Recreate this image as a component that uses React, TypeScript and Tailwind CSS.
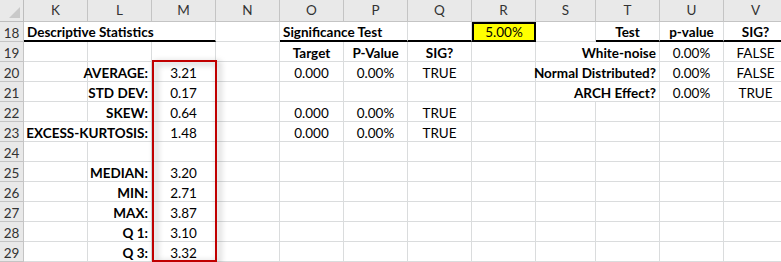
type Align = 'left' | 'center' | 'right';

interface Cell {
  span?: 1 | 2 | 3;
  text?: string;
  align?: Align;
  bold?: boolean;
  rule?: boolean;
  fill?: boolean;
}

const COLS = ['K', 'L', 'M', 'N', 'O', 'P', 'Q', 'R', 'S', 'T', 'U', 'V'];

const spanCls = { 1: '', 2: 'col-span-2', 3: 'col-span-3' };
const alignCls: Record<Align, string> = {
  left: 'justify-start pl-[3px]',
  center: 'justify-center',
  right: 'justify-end pr-[3px]',
};

const blank = (n: number): Cell[] => Array.from({ length: n }, () => ({}));
const c = (text: string, bold = false): Cell => ({ text, align: 'center', bold });
const r = (text: string, span: 1 | 2 = 1): Cell => ({ text, align: 'right', bold: true, span });

// K..V for each sheet row, starting at row 18
const rows: { n: number; cells: Cell[] }[] = [
  {
    n: 18,
    cells: [
      { span: 3, text: 'Descriptive Statistics', align: 'left', bold: true, rule: true },
      {},
      { span: 2, text: 'Significance Test', align: 'left', bold: true, rule: true },
      { rule: true },
      { text: '5.00%', align: 'center', fill: true },
      {},
      { ...c('Test', true), rule: true },
      { ...c('p-value', true), rule: true },
      { ...c('SIG?', true), rule: true },
    ],
  },
  {
    n: 19,
    cells: [...blank(4), c('Target', true), c('P-Value', true), c('SIG?', true), {}, r('White-noise', 2), c('0.00%'), c('FALSE')],
  },
  {
    n: 20,
    cells: [{}, r('AVERAGE:'), c('3.21'), {}, c('0.000'), c('0.00%'), c('TRUE'), {}, r('Normal Distributed?', 2), c('0.00%'), c('FALSE')],
  },
  {
    n: 21,
    cells: [{}, r('STD DEV:'), c('0.17'), ...blank(5), r('ARCH Effect?', 2), c('0.00%'), c('TRUE')],
  },
  {
    n: 22,
    cells: [{}, r('SKEW:'), c('0.64'), {}, c('0.000'), c('0.00%'), c('TRUE'), ...blank(5)],
  },
  {
    n: 23,
    cells: [r('EXCESS-KURTOSIS:', 2), c('1.48'), {}, c('0.000'), c('0.00%'), c('TRUE'), ...blank(5)],
  },
  { n: 24, cells: blank(12) },
  { n: 25, cells: [{}, r('MEDIAN:'), c('3.20'), ...blank(9)] },
  { n: 26, cells: [{}, r('MIN:'), c('2.71'), ...blank(9)] },
  { n: 27, cells: [{}, r('MAX:'), c('3.87'), ...blank(9)] },
  { n: 28, cells: [{}, r('Q 1:'), c('3.10'), ...blank(9)] },
  { n: 29, cells: [{}, r('Q 3:'), c('3.32'), ...blank(9)] },
];

function SheetCell({ cell }: { cell: Cell }) {
  const border = cell.fill
    ? 'border-2 border-black bg-[#ffff00]'
    : cell.rule
      ? 'border-r border-r-[#dadcdd] border-b-2 border-b-black'
      : 'border-r border-b border-[#dadcdd]';
  return (
    <div
      className={`flex items-end pb-px whitespace-nowrap text-black ${spanCls[cell.span ?? 1]} ${alignCls[cell.align ?? 'left']} ${cell.bold ? 'font-bold' : ''} ${border}`}
    >
      {cell.text}
    </div>
  );
}

export default function App() {
  return (
    <div className="relative w-[781px] h-[262px] overflow-hidden bg-white font-['Lato',sans-serif] text-[13.5px] leading-none">
      <div className="grid grid-cols-[24px_64px_64px_64px_64px_64px_64px_64px_64px_60px_64px_64px_64px] grid-rows-[22px_repeat(12,20px)]">
        {/* select-all corner */}
        <div className="relative bg-[#e9e9e9] border-r border-b border-[#bdbdbd]">
          <svg className="absolute right-[3px] bottom-[3px]" width="11" height="11" viewBox="0 0 11 11">
            <polygon points="11,0 11,11 0,11" fill="#c9c9c9" />
          </svg>
        </div>
        {COLS.map((col) => (
          <div
            key={col}
            className="flex items-center justify-center bg-[#e9e9e9] border-r border-b border-[#c4c4c4] text-[#333]"
          >
            {col}
          </div>
        ))}

        {rows.map((row) => (
          <div key={row.n} className="contents">
            <div className="flex items-end justify-center pb-px bg-[#e9e9e9] border-r border-b border-[#c4c4c4] text-[#333]">
              {row.n}
            </div>
            {row.cells.map((cell, i) => (
              <SheetCell key={i} cell={cell} />
            ))}
          </div>
        ))}
      </div>

      {/* red call-out frame around the stats column */}
      <div className="absolute left-[152px] top-[60px] w-[65px] h-[202px] border-2 border-[#c00000] drop-shadow-[3px_2px_3px_rgba(0,0,0,0.35)]" />
    </div>
  );
}
